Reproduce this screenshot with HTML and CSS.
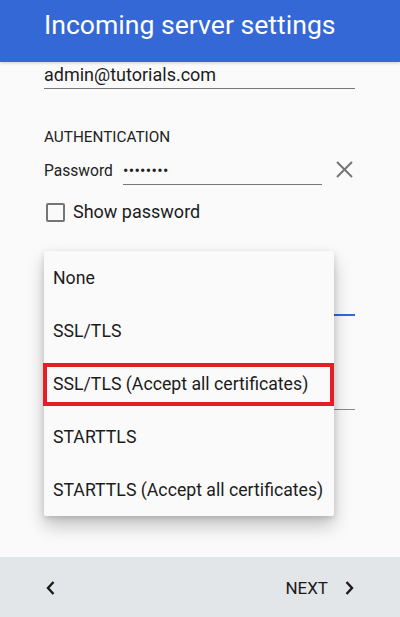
FILE: index.html
```html
<!DOCTYPE html>
<html>
<head>
<meta charset="utf-8">
<link rel="stylesheet" href="styles.css">
</head>
<body>
<div class="screen">
  <header class="appbar">
    <h1 class="title">Incoming server settings</h1>
  </header>
  <main class="content">
    <div class="field email">admin@tutorials.com</div>
    <div class="section-label">AUTHENTICATION</div>
    <div class="password-row">
      <span class="pw-label">Password</span>
      <span class="pw-input">••••••••</span>
      <svg class="clear-icon" width="17" height="17" viewBox="0 0 17 17">
        <path d="M1 1 L16 16 M16 1 L1 16" stroke="#757575" stroke-width="2" fill="none"/>
      </svg>
    </div>
    <label class="check-row">
      <span class="checkbox"></span>
      <span class="check-text">Show password</span>
    </label>
    <div class="spinner spinner-active"></div>
    <div class="spinner spinner-plain"></div>

    <div class="menu">
      <div class="menu-item">None</div>
      <div class="menu-item">SSL/TLS</div>
      <div class="menu-item highlight">SSL/TLS (Accept all certificates)</div>
      <div class="menu-item">STARTTLS</div>
      <div class="menu-item">STARTTLS (Accept all certificates)</div>
    </div>
  </main>
  <footer class="navbar">
    <button class="nav-btn prev">
      <svg width="9" height="14" viewBox="0 0 9 14"><path d="M7.5 1 L2 7 L7.5 13" stroke="#1a1a1a" stroke-width="2.4" fill="none"/></svg>
    </button>
    <button class="nav-btn next">
      <span class="next-text">NEXT</span>
      <svg width="9" height="14" viewBox="0 0 9 14"><path d="M1.5 1 L7 7 L1.5 13" stroke="#1a1a1a" stroke-width="2.4" fill="none"/></svg>
    </button>
  </footer>
</div>
</body>
</html>
```

FILE: styles.css
```css
* { box-sizing: border-box; }
html, body {
  margin: 0;
  padding: 0;
  background: #fafafa;
}
body {
  font-family: Roboto, "Noto Sans", sans-serif;
  color: #212121;
}
.screen {
  width: 400px;
  height: 617px;
  display: flex;
  flex-direction: column;
  overflow: hidden;
}
.appbar {
  height: 62px;
  background: #3468d6;
  padding: 11px 0 0 44px;
  box-shadow: 0 1px 3px rgba(0,0,0,0.18);
  position: relative;
  z-index: 1;
  flex: none;
}
.title {
  margin: 0;
  font-weight: 400;
  font-size: 26.6px;
  line-height: 28px;
  color: #ffffff;
}
.content {
  flex: 1;
  position: relative;
  padding: 1px 45px 0 44px;
}
.field.email {
  font-size: 18px;
  line-height: 24px;
  padding-bottom: 1px;
  border-bottom: 1px solid #777777;
  color: #1c1c1c;
}
.section-label {
  margin-top: 38px;
  font-size: 15.3px;
  line-height: 20px;
  color: #222222;
}
.password-row {
  margin-top: 14px;
  display: flex;
  align-items: flex-start;
}
.pw-label {
  font-size: 15.6px;
  line-height: 20px;
  width: 79px;
  color: #222222;
}
.pw-input {
  width: 199px;
  height: 24px;
  font-size: 16px;
  line-height: 20px;
  padding-bottom: 3px;
  border-bottom: 1px solid #777777;
  letter-spacing: 0.3px;
  color: #222222;
}
.clear-icon {
  margin-left: 14px;
  margin-top: 0;
}
.check-row {
  margin-top: 15px;
  display: flex;
  align-items: center;
  height: 24px;
}
.checkbox {
  width: 19px;
  height: 19px;
  border: 2px solid #757575;
  border-radius: 2px;
  margin-left: 2px;
  margin-right: 8px;
}
.check-text {
  font-size: 18px;
  line-height: 24px;
  color: #1c1c1c;
}
.spinner-active {
  height: 92px;
  border-bottom: 2px solid #3468d6;
}
.spinner-plain {
  height: 94px;
  border-bottom: 1px solid #8a8a8a;
}
.menu {
  position: absolute;
  left: 44px;
  top: 189px;
  width: 290px;
  height: 265px;
  background: #fafafa;
  border-radius: 2px;
  box-shadow: 0 10px 18px rgba(0,0,0,0.22), 0 2px 6px rgba(0,0,0,0.14);
  z-index: 2;
}
.menu-item {
  position: relative;
  height: 53px;
  padding-left: 9px;
  font-size: 17.7px;
  line-height: 53px;
  color: #1c1c1c;
  white-space: nowrap;
}
.menu-item:first-child { margin-top: 1px; }
.menu-item.highlight::after {
  content: "";
  position: absolute;
  left: -1px;
  right: 0;
  top: 5px;
  bottom: 5px;
  border: 4px solid #e41e26;
}
.navbar {
  height: 60px;
  flex: none;
  background: #e3e6e9;
  display: flex;
  align-items: center;
  justify-content: space-between;
  padding: 2px 46px 0 46px;
}
.nav-btn {
  border: 0;
  background: transparent;
  padding: 0;
  display: flex;
  align-items: center;
  font-family: Roboto, sans-serif;
}
.next-text {
  font-size: 17px;
  color: #1a1a1a;
  margin-right: 17px;
}
```
